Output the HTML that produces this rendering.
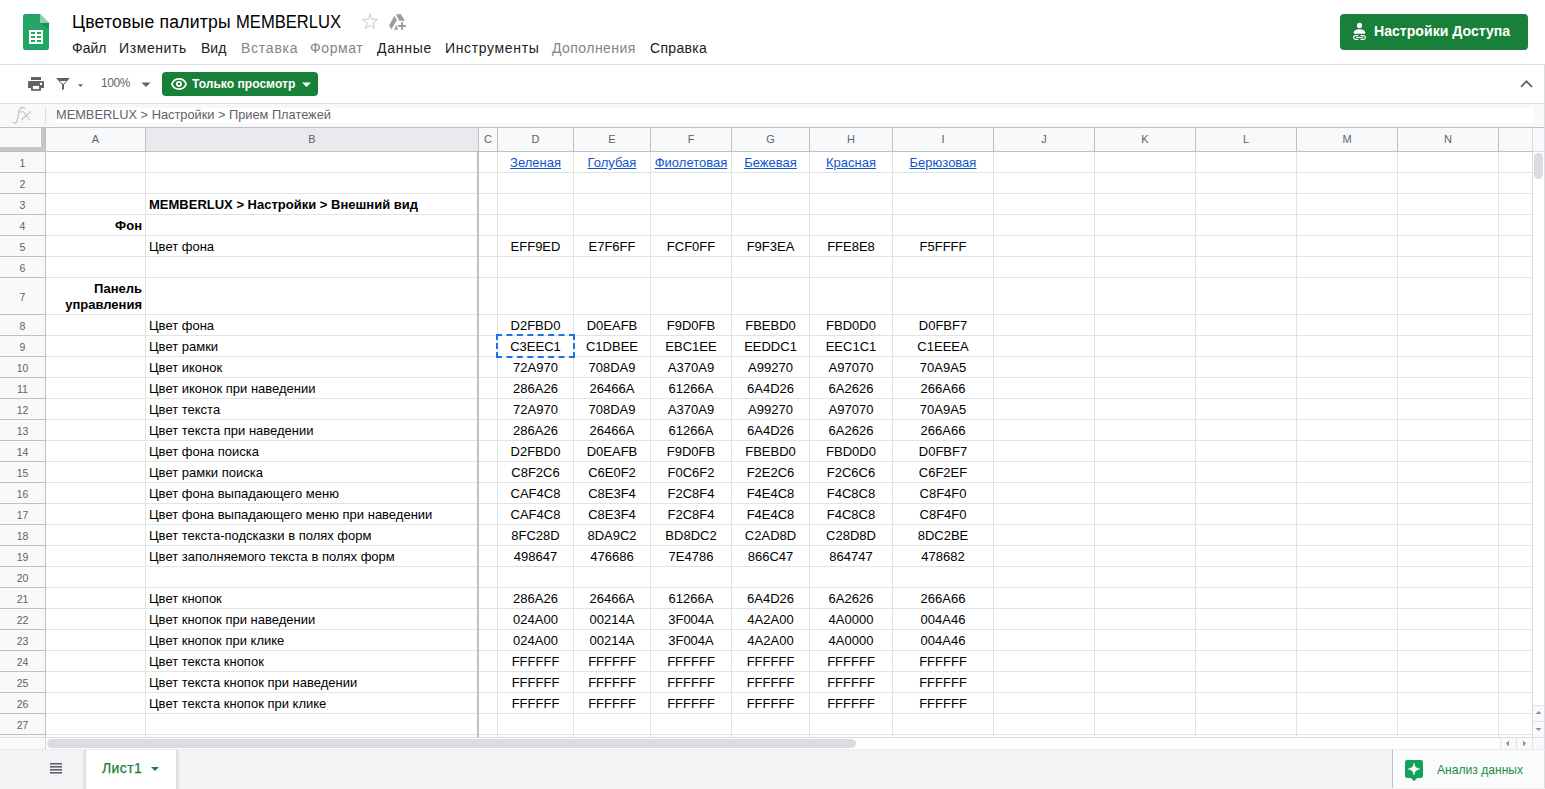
<!DOCTYPE html>
<html><head><meta charset="utf-8"><style>
*{margin:0;padding:0;box-sizing:border-box}
html,body{width:1545px;height:789px;overflow:hidden;background:#fff;font-family:"Liberation Sans",sans-serif;position:relative}
.a{position:absolute}
.hl{position:absolute;height:1px;background:#e2e3e3}
.vl{position:absolute;width:1px;background:#e2e3e3}
.ct{position:absolute;font-size:13px;color:#000;white-space:nowrap;line-height:16px}
.ch{position:absolute;font-size:11px;color:#5f6368;text-align:center;line-height:13px}
.menu{position:absolute;top:39.5px;font-size:14px;color:#202124;white-space:nowrap;line-height:17px}
.dis{color:#80868b}
</style></head><body>

<div class="a" style="left:23px;top:14px;width:26px;height:36px">
<svg width="26" height="36" viewBox="0 0 26 36">
<path d="M2.5 0H17L26 9V33.5A2.5 2.5 0 0 1 23.5 36H2.5A2.5 2.5 0 0 1 0 33.5V2.5A2.5 2.5 0 0 1 2.5 0Z" fill="#23a566"/>
<path d="M17 0V9H26Z" fill="#8ed1b1"/>
<path d="M17 9H26V15Z" fill="#1e8e57"/>
<rect x="6" y="16" width="14" height="14" fill="#fff"/>
<rect x="8" y="18" width="4" height="2" fill="#23a566"/><rect x="14" y="18" width="4" height="2" fill="#23a566"/>
<rect x="8" y="22" width="4" height="2" fill="#23a566"/><rect x="14" y="22" width="4" height="2" fill="#23a566"/>
<rect x="8" y="26" width="4" height="2" fill="#23a566"/><rect x="14" y="26" width="4" height="2" fill="#23a566"/>
</svg></div>
<div class="a" style="left:72px;top:11px;font-size:17.6px;color:#000;white-space:nowrap;line-height:22px;letter-spacing:0.2px">Цветовые палитры <span style="display:inline-block;letter-spacing:0;transform:scaleX(0.943);transform-origin:0 0">MEMBERLUX</span></div>
<svg class="a" style="left:356px;top:10px" width="54" height="24" viewBox="0 0 54 24">
<path d="M14 3.6L15.6 9.3H21.6L16.8 13.1L18.6 18.7L14 15.3L9.4 18.7L11.2 13.1L6.3 9.3H12.4Z" fill="none" stroke="#c6c8ca" stroke-width="0.95" stroke-linejoin="round"/>
<path d="M38.5 5.8L40.9 10L35.3 19.6L33 15.6Z" fill="#9a9ca0"/>
<path d="M39.9 4.2H44.8L49 10.8H43.4Z" fill="#9a9ca0"/>
<path d="M40.6 15L42 19.8H37.9Z" fill="#9a9ca0"/>
<rect x="45.1" y="12.1" width="1.9" height="7.8" fill="#9a9ca0"/>
<rect x="42.1" y="15" width="7.9" height="1.9" fill="#9a9ca0"/>
</svg>
<div class="menu" style="left:72px">Файл</div>
<div class="menu" style="left:119px;letter-spacing:0.6px">Изменить</div>
<div class="menu" style="left:201px">Вид</div>
<div class="menu dis" style="left:241px;letter-spacing:0.75px">Вставка</div>
<div class="menu dis" style="left:310px;letter-spacing:0.6px">Формат</div>
<div class="menu" style="left:377px;letter-spacing:0.75px">Данные</div>
<div class="menu" style="left:445px;letter-spacing:0.65px">Инструменты</div>
<div class="menu dis" style="left:552px;letter-spacing:0.45px">Дополнения</div>
<div class="menu" style="left:650px;letter-spacing:0.3px">Справка</div>
<div class="a" style="left:1340px;top:14px;width:188px;height:36px;background:#188038;border-radius:4px"></div>
<svg class="a" style="left:1350px;top:20px" width="18" height="22" viewBox="0 0 18 22">
<circle cx="9.5" cy="5.4" r="2.6" fill="#fff"/>
<path d="M3.9 13.8V12.3C3.9 10.3 6.7 9.2 9.5 9.2S15.1 10.3 15.1 12.3V13.8Z" fill="#fff"/>
<path d="M8.4 15.6H5.5A1.9 1.9 0 0 0 5.5 19.4H8.4M10.4 15.6H13.5A1.9 1.9 0 0 1 13.5 19.4H10.4M6.2 17.5H12.8" fill="none" stroke="#fff" stroke-width="1.1"/>
</svg>
<div class="a" style="left:1374px;top:23px;font-size:14.1px;font-weight:bold;color:#fff;white-space:nowrap;line-height:17px">Настройки Доступа</div>

<div class="a" style="left:0;top:64px;width:1545px;height:1px;background:#dadce0"></div>
<div class="a" style="left:1544px;top:64px;width:1px;height:40px;background:#dadce0"></div>
<div class="a" style="left:0;top:103px;width:1545px;height:1px;background:#dadce0"></div>
<svg class="a" style="left:24px;top:72px" width="66" height="24" viewBox="0 0 66 24">
<rect x="7" y="5" width="10" height="3" fill="#5f6368"/>
<path d="M5.2 9H18.8A1.2 1.2 0 0 1 20 10.2V16H4V10.2A1.2 1.2 0 0 1 5.2 9Z" fill="#5f6368"/>
<rect x="7" y="13.7" width="10" height="5.1" fill="#5f6368"/>
<rect x="8.9" y="13.9" width="6.2" height="3.2" fill="#fff"/>
<rect x="15.9" y="10.8" width="2.2" height="2.2" fill="#fff"/>
<path d="M32 6.1H46L40 12.6V17.3L38 18V12.6Z" fill="#5f6368"/>
<path d="M35.8 9H42.3L39.1 12.3Z" fill="#fff"/>
<path d="M54 12.2H59L56.5 15Z" fill="#5f6368"/>
</svg>
<div class="a" style="left:101px;top:76px;font-size:12px;letter-spacing:-0.4px;color:#5f6368;line-height:15px">100%</div>
<svg class="a" style="left:141px;top:82px" width="10" height="6" viewBox="0 0 10 6"><path d="M0.5 0.5H9.5L5 5Z" fill="#5f6368"/></svg>
<div class="a" style="left:162px;top:72px;width:156px;height:24px;background:#188038;border-radius:4px"></div>
<svg class="a" style="left:171px;top:78px" width="16" height="12" viewBox="0 0 16 12">
<path d="M8 0.9C4.6 0.9 2 2.9 0.9 6C2 9.1 4.6 11.1 8 11.1S14 9.1 15.1 6C14 2.9 11.4 0.9 8 0.9Z" fill="none" stroke="#fff" stroke-width="1.8" stroke-linejoin="round"/>
<circle cx="7.95" cy="5.95" r="2.1" fill="none" stroke="#fff" stroke-width="1.9"/>
</svg>
<div class="a" style="left:192px;top:77px;font-size:12.1px;font-weight:bold;color:#fff;white-space:nowrap;line-height:14px">Только просмотр</div>
<svg class="a" style="left:302px;top:82px" width="9" height="6" viewBox="0 0 9 6"><path d="M0 0.5H9L4.5 5Z" fill="#fff"/></svg>
<svg class="a" style="left:1520px;top:79px" width="13" height="9" viewBox="0 0 13 9"><path d="M1 7.8L6.5 2.3L12 7.8" fill="none" stroke="#5f6368" stroke-width="1.8"/></svg>

<div class="a" style="left:0;top:104px;width:1544px;height:23px;background:#f8f8f8"></div>
<div class="a" style="left:56px;top:108px;width:1478px;height:15px;background:#fff"></div>
<svg class="a" style="left:8px;top:104px" width="32" height="23" viewBox="0 0 32 23">
<path d="M5.3 18.4C6.3 19.6 8.3 19.6 9 17.2L11.2 7.2C11.8 4.6 13.2 3.4 14.8 3.5C15.8 3.6 16.4 4.1 16.6 4.5" fill="none" stroke="#c6c6c6" stroke-width="1.3" stroke-linecap="round"/>
<path d="M9.3 7.8H15.6" fill="none" stroke="#c6c6c6" stroke-width="1"/>
<path d="M15.3 7.6L21.6 16M22.8 7.4L13.4 16" fill="none" stroke="#c6c6c6" stroke-width="1.2"/>
</svg>
<div class="a" style="left:45px;top:107px;width:1px;height:17px;background:#dadce0"></div>
<div class="a" style="left:56px;top:107px;font-size:12.8px;color:#5f6368;white-space:nowrap;line-height:15px">MEMBERLUX &gt; Настройки &gt; Прием Платежей</div>

<div class="a" style="left:0;top:127px;width:1544px;height:1px;background:#c0c0c0"></div>
<div class="a" style="left:0;top:128px;width:1544px;height:23px;background:#f8f9fa"></div>
<div class="a" style="left:0;top:147px;width:45px;height:4px;background:#c6c6c6"></div>
<div class="a" style="left:41px;top:128px;width:4px;height:23px;background:#c6c6c6"></div>
<div class="a" style="left:146px;top:128px;width:332px;height:23px;background:#e8eaed"></div>
<div class="ch" style="left:46px;top:133px;width:99px">A</div>
<div class="a" style="left:145px;top:128px;width:1px;height:23px;background:#c0c0c0"></div>
<div class="ch" style="left:146px;top:133px;width:332px">B</div>
<div class="a" style="left:478px;top:128px;width:1px;height:23px;background:#c0c0c0"></div>
<div class="ch" style="left:479px;top:133px;width:18px">C</div>
<div class="a" style="left:497px;top:128px;width:1px;height:23px;background:#c0c0c0"></div>
<div class="ch" style="left:498px;top:133px;width:75px">D</div>
<div class="a" style="left:573px;top:128px;width:1px;height:23px;background:#c0c0c0"></div>
<div class="ch" style="left:574px;top:133px;width:76px">E</div>
<div class="a" style="left:650px;top:128px;width:1px;height:23px;background:#c0c0c0"></div>
<div class="ch" style="left:651px;top:133px;width:80px">F</div>
<div class="a" style="left:731px;top:128px;width:1px;height:23px;background:#c0c0c0"></div>
<div class="ch" style="left:732px;top:133px;width:77px">G</div>
<div class="a" style="left:809px;top:128px;width:1px;height:23px;background:#c0c0c0"></div>
<div class="ch" style="left:810px;top:133px;width:82px">H</div>
<div class="a" style="left:892px;top:128px;width:1px;height:23px;background:#c0c0c0"></div>
<div class="ch" style="left:893px;top:133px;width:100px">I</div>
<div class="a" style="left:993px;top:128px;width:1px;height:23px;background:#c0c0c0"></div>
<div class="ch" style="left:994px;top:133px;width:100px">J</div>
<div class="a" style="left:1094px;top:128px;width:1px;height:23px;background:#c0c0c0"></div>
<div class="ch" style="left:1095px;top:133px;width:100px">K</div>
<div class="a" style="left:1195px;top:128px;width:1px;height:23px;background:#c0c0c0"></div>
<div class="ch" style="left:1196px;top:133px;width:100px">L</div>
<div class="a" style="left:1296px;top:128px;width:1px;height:23px;background:#c0c0c0"></div>
<div class="ch" style="left:1297px;top:133px;width:100px">M</div>
<div class="a" style="left:1397px;top:128px;width:1px;height:23px;background:#c0c0c0"></div>
<div class="ch" style="left:1398px;top:133px;width:100px">N</div>
<div class="a" style="left:1498px;top:128px;width:1px;height:23px;background:#c0c0c0"></div>
<div class="a" style="left:45px;top:128px;width:1px;height:23px;background:#c0c0c0"></div>
<div class="a" style="left:1532px;top:128px;width:1px;height:23px;background:#c0c0c0"></div>
<div class="a" style="left:0;top:151px;width:1532px;height:1px;background:#c0c0c0"></div>
<div class="a" style="left:1533px;top:151px;width:11px;height:1px;background:#dadce0"></div>
<div class="a" style="left:0;top:152px;width:45px;height:597px;background:#f8f9fa"></div>
<div class="a" style="left:45px;top:152px;width:1px;height:586px;background:#c0c0c0"></div>
<div class="a" style="left:45px;top:738px;width:1px;height:11px;background:#d4d4d4"></div>
<div class="ch" style="left:0;top:156.5px;width:45px;font-size:10.5px">1</div>
<div class="a" style="left:0;top:172px;width:45px;height:1px;background:#c0c0c0"></div>
<div class="ch" style="left:0;top:177.5px;width:45px;font-size:10.5px">2</div>
<div class="a" style="left:0;top:193px;width:45px;height:1px;background:#c0c0c0"></div>
<div class="ch" style="left:0;top:198.5px;width:45px;font-size:10.5px">3</div>
<div class="a" style="left:0;top:214px;width:45px;height:1px;background:#c0c0c0"></div>
<div class="ch" style="left:0;top:219.5px;width:45px;font-size:10.5px">4</div>
<div class="a" style="left:0;top:235px;width:45px;height:1px;background:#c0c0c0"></div>
<div class="ch" style="left:0;top:240.5px;width:45px;font-size:10.5px">5</div>
<div class="a" style="left:0;top:256px;width:45px;height:1px;background:#c0c0c0"></div>
<div class="ch" style="left:0;top:261.5px;width:45px;font-size:10.5px">6</div>
<div class="a" style="left:0;top:277px;width:45px;height:1px;background:#c0c0c0"></div>
<div class="ch" style="left:0;top:290.5px;width:45px;font-size:10.5px">7</div>
<div class="a" style="left:0;top:314px;width:45px;height:1px;background:#c0c0c0"></div>
<div class="ch" style="left:0;top:319.5px;width:45px;font-size:10.5px">8</div>
<div class="a" style="left:0;top:335px;width:45px;height:1px;background:#c0c0c0"></div>
<div class="ch" style="left:0;top:340.5px;width:45px;font-size:10.5px">9</div>
<div class="a" style="left:0;top:356px;width:45px;height:1px;background:#c0c0c0"></div>
<div class="ch" style="left:0;top:361.5px;width:45px;font-size:10.5px">10</div>
<div class="a" style="left:0;top:377px;width:45px;height:1px;background:#c0c0c0"></div>
<div class="ch" style="left:0;top:382.5px;width:45px;font-size:10.5px">11</div>
<div class="a" style="left:0;top:398px;width:45px;height:1px;background:#c0c0c0"></div>
<div class="ch" style="left:0;top:403.5px;width:45px;font-size:10.5px">12</div>
<div class="a" style="left:0;top:419px;width:45px;height:1px;background:#c0c0c0"></div>
<div class="ch" style="left:0;top:424.5px;width:45px;font-size:10.5px">13</div>
<div class="a" style="left:0;top:440px;width:45px;height:1px;background:#c0c0c0"></div>
<div class="ch" style="left:0;top:445.5px;width:45px;font-size:10.5px">14</div>
<div class="a" style="left:0;top:461px;width:45px;height:1px;background:#c0c0c0"></div>
<div class="ch" style="left:0;top:466.5px;width:45px;font-size:10.5px">15</div>
<div class="a" style="left:0;top:482px;width:45px;height:1px;background:#c0c0c0"></div>
<div class="ch" style="left:0;top:487.5px;width:45px;font-size:10.5px">16</div>
<div class="a" style="left:0;top:503px;width:45px;height:1px;background:#c0c0c0"></div>
<div class="ch" style="left:0;top:508.5px;width:45px;font-size:10.5px">17</div>
<div class="a" style="left:0;top:524px;width:45px;height:1px;background:#c0c0c0"></div>
<div class="ch" style="left:0;top:529.5px;width:45px;font-size:10.5px">18</div>
<div class="a" style="left:0;top:545px;width:45px;height:1px;background:#c0c0c0"></div>
<div class="ch" style="left:0;top:550.5px;width:45px;font-size:10.5px">19</div>
<div class="a" style="left:0;top:566px;width:45px;height:1px;background:#c0c0c0"></div>
<div class="ch" style="left:0;top:571.5px;width:45px;font-size:10.5px">20</div>
<div class="a" style="left:0;top:587px;width:45px;height:1px;background:#c0c0c0"></div>
<div class="ch" style="left:0;top:592.5px;width:45px;font-size:10.5px">21</div>
<div class="a" style="left:0;top:608px;width:45px;height:1px;background:#c0c0c0"></div>
<div class="ch" style="left:0;top:613.5px;width:45px;font-size:10.5px">22</div>
<div class="a" style="left:0;top:629px;width:45px;height:1px;background:#c0c0c0"></div>
<div class="ch" style="left:0;top:634.5px;width:45px;font-size:10.5px">23</div>
<div class="a" style="left:0;top:650px;width:45px;height:1px;background:#c0c0c0"></div>
<div class="ch" style="left:0;top:655.5px;width:45px;font-size:10.5px">24</div>
<div class="a" style="left:0;top:671px;width:45px;height:1px;background:#c0c0c0"></div>
<div class="ch" style="left:0;top:676.5px;width:45px;font-size:10.5px">25</div>
<div class="a" style="left:0;top:692px;width:45px;height:1px;background:#c0c0c0"></div>
<div class="ch" style="left:0;top:697.5px;width:45px;font-size:10.5px">26</div>
<div class="a" style="left:0;top:713px;width:45px;height:1px;background:#c0c0c0"></div>
<div class="ch" style="left:0;top:718.5px;width:45px;font-size:10.5px">27</div>
<div class="a" style="left:0;top:734px;width:45px;height:1px;background:#c0c0c0"></div>
<div class="hl" style="left:46px;top:172px;width:1486px"></div>
<div class="hl" style="left:46px;top:193px;width:1486px"></div>
<div class="hl" style="left:46px;top:214px;width:1486px"></div>
<div class="hl" style="left:46px;top:235px;width:1486px"></div>
<div class="hl" style="left:46px;top:256px;width:1486px"></div>
<div class="hl" style="left:46px;top:277px;width:1486px"></div>
<div class="hl" style="left:46px;top:314px;width:1486px"></div>
<div class="hl" style="left:46px;top:335px;width:1486px"></div>
<div class="hl" style="left:46px;top:356px;width:1486px"></div>
<div class="hl" style="left:46px;top:377px;width:1486px"></div>
<div class="hl" style="left:46px;top:398px;width:1486px"></div>
<div class="hl" style="left:46px;top:419px;width:1486px"></div>
<div class="hl" style="left:46px;top:440px;width:1486px"></div>
<div class="hl" style="left:46px;top:461px;width:1486px"></div>
<div class="hl" style="left:46px;top:482px;width:1486px"></div>
<div class="hl" style="left:46px;top:503px;width:1486px"></div>
<div class="hl" style="left:46px;top:524px;width:1486px"></div>
<div class="hl" style="left:46px;top:545px;width:1486px"></div>
<div class="hl" style="left:46px;top:566px;width:1486px"></div>
<div class="hl" style="left:46px;top:587px;width:1486px"></div>
<div class="hl" style="left:46px;top:608px;width:1486px"></div>
<div class="hl" style="left:46px;top:629px;width:1486px"></div>
<div class="hl" style="left:46px;top:650px;width:1486px"></div>
<div class="hl" style="left:46px;top:671px;width:1486px"></div>
<div class="hl" style="left:46px;top:692px;width:1486px"></div>
<div class="hl" style="left:46px;top:713px;width:1486px"></div>
<div class="hl" style="left:46px;top:734px;width:1486px"></div>
<div class="vl" style="left:145px;top:152px;height:585px"></div>
<div class="vl" style="left:497px;top:152px;height:585px"></div>
<div class="vl" style="left:573px;top:152px;height:585px"></div>
<div class="vl" style="left:650px;top:152px;height:585px"></div>
<div class="vl" style="left:731px;top:152px;height:585px"></div>
<div class="vl" style="left:809px;top:152px;height:585px"></div>
<div class="vl" style="left:892px;top:152px;height:585px"></div>
<div class="vl" style="left:993px;top:152px;height:585px"></div>
<div class="vl" style="left:1094px;top:152px;height:585px"></div>
<div class="vl" style="left:1195px;top:152px;height:585px"></div>
<div class="vl" style="left:1296px;top:152px;height:585px"></div>
<div class="vl" style="left:1397px;top:152px;height:585px"></div>
<div class="vl" style="left:1498px;top:152px;height:585px"></div>
<div class="a" style="left:477px;top:152px;width:2px;height:585px;background:#bdc1c6"></div>
<div class="a" style="left:1532px;top:128px;width:1px;height:609px;background:#dadce0"></div>
<div class="a" style="left:1544px;top:104px;width:1px;height:645px;background:#dadce0"></div>
<div class="ct" style="left:498px;width:75px;top:155px;text-align:center;padding:0 3px;color:#1155cc;text-decoration:underline;">Зеленая</div>
<div class="ct" style="left:574px;width:76px;top:155px;text-align:center;padding:0 3px;color:#1155cc;text-decoration:underline;">Голубая</div>
<div class="ct" style="left:651px;width:80px;top:155px;text-align:center;padding:0 3px;color:#1155cc;text-decoration:underline;">Фиолетовая</div>
<div class="ct" style="left:732px;width:77px;top:155px;text-align:center;padding:0 3px;color:#1155cc;text-decoration:underline;">Бежевая</div>
<div class="ct" style="left:810px;width:82px;top:155px;text-align:center;padding:0 3px;color:#1155cc;text-decoration:underline;">Красная</div>
<div class="ct" style="left:893px;width:100px;top:155px;text-align:center;padding:0 3px;color:#1155cc;text-decoration:underline;">Берюзовая</div>
<div class="ct" style="left:146px;width:332px;top:197px;text-align:left;padding:0 3px;font-weight:bold;">MEMBERLUX &gt; Настройки &gt; Внешний вид</div>
<div class="ct" style="left:46px;width:99px;top:218px;text-align:right;padding:0 3px;font-weight:bold;">Фон</div>
<div class="ct" style="left:46px;width:99px;top:281px;text-align:right;padding:0 3px;font-weight:bold;line-height:16px">Панель<br>управления</div>
<div class="ct" style="left:146px;width:332px;top:239px;text-align:left;padding:0 3px;">Цвет фона</div>
<div class="ct" style="left:498px;width:75px;top:239px;text-align:center;padding:0 3px;">EFF9ED</div>
<div class="ct" style="left:574px;width:76px;top:239px;text-align:center;padding:0 3px;">E7F6FF</div>
<div class="ct" style="left:651px;width:80px;top:239px;text-align:center;padding:0 3px;">FCF0FF</div>
<div class="ct" style="left:732px;width:77px;top:239px;text-align:center;padding:0 3px;">F9F3EA</div>
<div class="ct" style="left:810px;width:82px;top:239px;text-align:center;padding:0 3px;">FFE8E8</div>
<div class="ct" style="left:893px;width:100px;top:239px;text-align:center;padding:0 3px;">F5FFFF</div>
<div class="ct" style="left:146px;width:332px;top:318px;text-align:left;padding:0 3px;">Цвет фона</div>
<div class="ct" style="left:498px;width:75px;top:318px;text-align:center;padding:0 3px;">D2FBD0</div>
<div class="ct" style="left:574px;width:76px;top:318px;text-align:center;padding:0 3px;">D0EAFB</div>
<div class="ct" style="left:651px;width:80px;top:318px;text-align:center;padding:0 3px;">F9D0FB</div>
<div class="ct" style="left:732px;width:77px;top:318px;text-align:center;padding:0 3px;">FBEBD0</div>
<div class="ct" style="left:810px;width:82px;top:318px;text-align:center;padding:0 3px;">FBD0D0</div>
<div class="ct" style="left:893px;width:100px;top:318px;text-align:center;padding:0 3px;">D0FBF7</div>
<div class="ct" style="left:146px;width:332px;top:339px;text-align:left;padding:0 3px;">Цвет рамки</div>
<div class="ct" style="left:498px;width:75px;top:339px;text-align:center;padding:0 3px;">C3EEC1</div>
<div class="ct" style="left:574px;width:76px;top:339px;text-align:center;padding:0 3px;">C1DBEE</div>
<div class="ct" style="left:651px;width:80px;top:339px;text-align:center;padding:0 3px;">EBC1EE</div>
<div class="ct" style="left:732px;width:77px;top:339px;text-align:center;padding:0 3px;">EEDDC1</div>
<div class="ct" style="left:810px;width:82px;top:339px;text-align:center;padding:0 3px;">EEC1C1</div>
<div class="ct" style="left:893px;width:100px;top:339px;text-align:center;padding:0 3px;">C1EEEA</div>
<div class="ct" style="left:146px;width:332px;top:360px;text-align:left;padding:0 3px;">Цвет иконок</div>
<div class="ct" style="left:498px;width:75px;top:360px;text-align:center;padding:0 3px;">72A970</div>
<div class="ct" style="left:574px;width:76px;top:360px;text-align:center;padding:0 3px;">708DA9</div>
<div class="ct" style="left:651px;width:80px;top:360px;text-align:center;padding:0 3px;">A370A9</div>
<div class="ct" style="left:732px;width:77px;top:360px;text-align:center;padding:0 3px;">A99270</div>
<div class="ct" style="left:810px;width:82px;top:360px;text-align:center;padding:0 3px;">A97070</div>
<div class="ct" style="left:893px;width:100px;top:360px;text-align:center;padding:0 3px;">70A9A5</div>
<div class="ct" style="left:146px;width:332px;top:381px;text-align:left;padding:0 3px;">Цвет иконок при наведении</div>
<div class="ct" style="left:498px;width:75px;top:381px;text-align:center;padding:0 3px;">286A26</div>
<div class="ct" style="left:574px;width:76px;top:381px;text-align:center;padding:0 3px;">26466A</div>
<div class="ct" style="left:651px;width:80px;top:381px;text-align:center;padding:0 3px;">61266A</div>
<div class="ct" style="left:732px;width:77px;top:381px;text-align:center;padding:0 3px;">6A4D26</div>
<div class="ct" style="left:810px;width:82px;top:381px;text-align:center;padding:0 3px;">6A2626</div>
<div class="ct" style="left:893px;width:100px;top:381px;text-align:center;padding:0 3px;">266A66</div>
<div class="ct" style="left:146px;width:332px;top:402px;text-align:left;padding:0 3px;">Цвет текста</div>
<div class="ct" style="left:498px;width:75px;top:402px;text-align:center;padding:0 3px;">72A970</div>
<div class="ct" style="left:574px;width:76px;top:402px;text-align:center;padding:0 3px;">708DA9</div>
<div class="ct" style="left:651px;width:80px;top:402px;text-align:center;padding:0 3px;">A370A9</div>
<div class="ct" style="left:732px;width:77px;top:402px;text-align:center;padding:0 3px;">A99270</div>
<div class="ct" style="left:810px;width:82px;top:402px;text-align:center;padding:0 3px;">A97070</div>
<div class="ct" style="left:893px;width:100px;top:402px;text-align:center;padding:0 3px;">70A9A5</div>
<div class="ct" style="left:146px;width:332px;top:423px;text-align:left;padding:0 3px;">Цвет текста при наведении</div>
<div class="ct" style="left:498px;width:75px;top:423px;text-align:center;padding:0 3px;">286A26</div>
<div class="ct" style="left:574px;width:76px;top:423px;text-align:center;padding:0 3px;">26466A</div>
<div class="ct" style="left:651px;width:80px;top:423px;text-align:center;padding:0 3px;">61266A</div>
<div class="ct" style="left:732px;width:77px;top:423px;text-align:center;padding:0 3px;">6A4D26</div>
<div class="ct" style="left:810px;width:82px;top:423px;text-align:center;padding:0 3px;">6A2626</div>
<div class="ct" style="left:893px;width:100px;top:423px;text-align:center;padding:0 3px;">266A66</div>
<div class="ct" style="left:146px;width:332px;top:444px;text-align:left;padding:0 3px;">Цвет фона поиска</div>
<div class="ct" style="left:498px;width:75px;top:444px;text-align:center;padding:0 3px;">D2FBD0</div>
<div class="ct" style="left:574px;width:76px;top:444px;text-align:center;padding:0 3px;">D0EAFB</div>
<div class="ct" style="left:651px;width:80px;top:444px;text-align:center;padding:0 3px;">F9D0FB</div>
<div class="ct" style="left:732px;width:77px;top:444px;text-align:center;padding:0 3px;">FBEBD0</div>
<div class="ct" style="left:810px;width:82px;top:444px;text-align:center;padding:0 3px;">FBD0D0</div>
<div class="ct" style="left:893px;width:100px;top:444px;text-align:center;padding:0 3px;">D0FBF7</div>
<div class="ct" style="left:146px;width:332px;top:465px;text-align:left;padding:0 3px;">Цвет рамки поиска</div>
<div class="ct" style="left:498px;width:75px;top:465px;text-align:center;padding:0 3px;">C8F2C6</div>
<div class="ct" style="left:574px;width:76px;top:465px;text-align:center;padding:0 3px;">C6E0F2</div>
<div class="ct" style="left:651px;width:80px;top:465px;text-align:center;padding:0 3px;">F0C6F2</div>
<div class="ct" style="left:732px;width:77px;top:465px;text-align:center;padding:0 3px;">F2E2C6</div>
<div class="ct" style="left:810px;width:82px;top:465px;text-align:center;padding:0 3px;">F2C6C6</div>
<div class="ct" style="left:893px;width:100px;top:465px;text-align:center;padding:0 3px;">C6F2EF</div>
<div class="ct" style="left:146px;width:332px;top:486px;text-align:left;padding:0 3px;">Цвет фона выпадающего меню</div>
<div class="ct" style="left:498px;width:75px;top:486px;text-align:center;padding:0 3px;">CAF4C8</div>
<div class="ct" style="left:574px;width:76px;top:486px;text-align:center;padding:0 3px;">C8E3F4</div>
<div class="ct" style="left:651px;width:80px;top:486px;text-align:center;padding:0 3px;">F2C8F4</div>
<div class="ct" style="left:732px;width:77px;top:486px;text-align:center;padding:0 3px;">F4E4C8</div>
<div class="ct" style="left:810px;width:82px;top:486px;text-align:center;padding:0 3px;">F4C8C8</div>
<div class="ct" style="left:893px;width:100px;top:486px;text-align:center;padding:0 3px;">C8F4F0</div>
<div class="ct" style="left:146px;width:332px;top:507px;text-align:left;padding:0 3px;">Цвет фона выпадающего меню при наведении</div>
<div class="ct" style="left:498px;width:75px;top:507px;text-align:center;padding:0 3px;">CAF4C8</div>
<div class="ct" style="left:574px;width:76px;top:507px;text-align:center;padding:0 3px;">C8E3F4</div>
<div class="ct" style="left:651px;width:80px;top:507px;text-align:center;padding:0 3px;">F2C8F4</div>
<div class="ct" style="left:732px;width:77px;top:507px;text-align:center;padding:0 3px;">F4E4C8</div>
<div class="ct" style="left:810px;width:82px;top:507px;text-align:center;padding:0 3px;">F4C8C8</div>
<div class="ct" style="left:893px;width:100px;top:507px;text-align:center;padding:0 3px;">C8F4F0</div>
<div class="ct" style="left:146px;width:332px;top:528px;text-align:left;padding:0 3px;">Цвет текста-подсказки в полях форм</div>
<div class="ct" style="left:498px;width:75px;top:528px;text-align:center;padding:0 3px;">8FC28D</div>
<div class="ct" style="left:574px;width:76px;top:528px;text-align:center;padding:0 3px;">8DA9C2</div>
<div class="ct" style="left:651px;width:80px;top:528px;text-align:center;padding:0 3px;">BD8DC2</div>
<div class="ct" style="left:732px;width:77px;top:528px;text-align:center;padding:0 3px;">C2AD8D</div>
<div class="ct" style="left:810px;width:82px;top:528px;text-align:center;padding:0 3px;">C28D8D</div>
<div class="ct" style="left:893px;width:100px;top:528px;text-align:center;padding:0 3px;">8DC2BE</div>
<div class="ct" style="left:146px;width:332px;top:549px;text-align:left;padding:0 3px;">Цвет заполняемого текста в полях форм</div>
<div class="ct" style="left:498px;width:75px;top:549px;text-align:center;padding:0 3px;">498647</div>
<div class="ct" style="left:574px;width:76px;top:549px;text-align:center;padding:0 3px;">476686</div>
<div class="ct" style="left:651px;width:80px;top:549px;text-align:center;padding:0 3px;">7E4786</div>
<div class="ct" style="left:732px;width:77px;top:549px;text-align:center;padding:0 3px;">866C47</div>
<div class="ct" style="left:810px;width:82px;top:549px;text-align:center;padding:0 3px;">864747</div>
<div class="ct" style="left:893px;width:100px;top:549px;text-align:center;padding:0 3px;">478682</div>
<div class="ct" style="left:146px;width:332px;top:591px;text-align:left;padding:0 3px;">Цвет кнопок</div>
<div class="ct" style="left:498px;width:75px;top:591px;text-align:center;padding:0 3px;">286A26</div>
<div class="ct" style="left:574px;width:76px;top:591px;text-align:center;padding:0 3px;">26466A</div>
<div class="ct" style="left:651px;width:80px;top:591px;text-align:center;padding:0 3px;">61266A</div>
<div class="ct" style="left:732px;width:77px;top:591px;text-align:center;padding:0 3px;">6A4D26</div>
<div class="ct" style="left:810px;width:82px;top:591px;text-align:center;padding:0 3px;">6A2626</div>
<div class="ct" style="left:893px;width:100px;top:591px;text-align:center;padding:0 3px;">266A66</div>
<div class="ct" style="left:146px;width:332px;top:612px;text-align:left;padding:0 3px;">Цвет кнопок при наведении</div>
<div class="ct" style="left:498px;width:75px;top:612px;text-align:center;padding:0 3px;">024A00</div>
<div class="ct" style="left:574px;width:76px;top:612px;text-align:center;padding:0 3px;">00214A</div>
<div class="ct" style="left:651px;width:80px;top:612px;text-align:center;padding:0 3px;">3F004A</div>
<div class="ct" style="left:732px;width:77px;top:612px;text-align:center;padding:0 3px;">4A2A00</div>
<div class="ct" style="left:810px;width:82px;top:612px;text-align:center;padding:0 3px;">4A0000</div>
<div class="ct" style="left:893px;width:100px;top:612px;text-align:center;padding:0 3px;">004A46</div>
<div class="ct" style="left:146px;width:332px;top:633px;text-align:left;padding:0 3px;">Цвет кнопок при клике</div>
<div class="ct" style="left:498px;width:75px;top:633px;text-align:center;padding:0 3px;">024A00</div>
<div class="ct" style="left:574px;width:76px;top:633px;text-align:center;padding:0 3px;">00214A</div>
<div class="ct" style="left:651px;width:80px;top:633px;text-align:center;padding:0 3px;">3F004A</div>
<div class="ct" style="left:732px;width:77px;top:633px;text-align:center;padding:0 3px;">4A2A00</div>
<div class="ct" style="left:810px;width:82px;top:633px;text-align:center;padding:0 3px;">4A0000</div>
<div class="ct" style="left:893px;width:100px;top:633px;text-align:center;padding:0 3px;">004A46</div>
<div class="ct" style="left:146px;width:332px;top:654px;text-align:left;padding:0 3px;">Цвет текста кнопок</div>
<div class="ct" style="left:498px;width:75px;top:654px;text-align:center;padding:0 3px;">FFFFFF</div>
<div class="ct" style="left:574px;width:76px;top:654px;text-align:center;padding:0 3px;">FFFFFF</div>
<div class="ct" style="left:651px;width:80px;top:654px;text-align:center;padding:0 3px;">FFFFFF</div>
<div class="ct" style="left:732px;width:77px;top:654px;text-align:center;padding:0 3px;">FFFFFF</div>
<div class="ct" style="left:810px;width:82px;top:654px;text-align:center;padding:0 3px;">FFFFFF</div>
<div class="ct" style="left:893px;width:100px;top:654px;text-align:center;padding:0 3px;">FFFFFF</div>
<div class="ct" style="left:146px;width:332px;top:675px;text-align:left;padding:0 3px;">Цвет текста кнопок при наведении</div>
<div class="ct" style="left:498px;width:75px;top:675px;text-align:center;padding:0 3px;">FFFFFF</div>
<div class="ct" style="left:574px;width:76px;top:675px;text-align:center;padding:0 3px;">FFFFFF</div>
<div class="ct" style="left:651px;width:80px;top:675px;text-align:center;padding:0 3px;">FFFFFF</div>
<div class="ct" style="left:732px;width:77px;top:675px;text-align:center;padding:0 3px;">FFFFFF</div>
<div class="ct" style="left:810px;width:82px;top:675px;text-align:center;padding:0 3px;">FFFFFF</div>
<div class="ct" style="left:893px;width:100px;top:675px;text-align:center;padding:0 3px;">FFFFFF</div>
<div class="ct" style="left:146px;width:332px;top:696px;text-align:left;padding:0 3px;">Цвет текста кнопок при клике</div>
<div class="ct" style="left:498px;width:75px;top:696px;text-align:center;padding:0 3px;">FFFFFF</div>
<div class="ct" style="left:574px;width:76px;top:696px;text-align:center;padding:0 3px;">FFFFFF</div>
<div class="ct" style="left:651px;width:80px;top:696px;text-align:center;padding:0 3px;">FFFFFF</div>
<div class="ct" style="left:732px;width:77px;top:696px;text-align:center;padding:0 3px;">FFFFFF</div>
<div class="ct" style="left:810px;width:82px;top:696px;text-align:center;padding:0 3px;">FFFFFF</div>
<div class="ct" style="left:893px;width:100px;top:696px;text-align:center;padding:0 3px;">FFFFFF</div>
<div class="a" style="left:496px;top:334px;width:79px;height:24px;border:2px dashed #1a73e8"></div>
<div class="a" style="left:1534px;top:153px;width:9px;height:26px;border-radius:5px;background:#dadce0"></div>
<div class="a" style="left:1533px;top:705px;width:11px;height:32px;background:#f8f9fa"></div>
<div class="a" style="left:1533px;top:705px;width:11px;height:1px;background:#e2e3e3"></div>
<div class="a" style="left:1533px;top:721px;width:11px;height:1px;background:#e2e3e3"></div>
<svg class="a" style="left:1535px;top:710px" width="7" height="5" viewBox="0 0 7 5"><path d="M0.6 4H6.4L3.5 1Z" fill="#909090"/></svg>
<svg class="a" style="left:1535px;top:727px" width="7" height="5" viewBox="0 0 7 5"><path d="M0.6 1H6.4L3.5 4Z" fill="#909090"/></svg>
<div class="a" style="left:0;top:737px;width:1545px;height:1px;background:#dadce0"></div>
<div class="a" style="left:47px;top:739px;width:809px;height:9px;border-radius:5px;background:#dadce0"></div>
<div class="a" style="left:1501px;top:738px;width:43px;height:11px;background:#f8f9fa"></div>
<div class="a" style="left:1500px;top:738px;width:1px;height:11px;background:#e2e3e3"></div>
<div class="a" style="left:1516px;top:738px;width:1px;height:11px;background:#e2e3e3"></div>
<div class="a" style="left:1532px;top:738px;width:1px;height:11px;background:#e2e3e3"></div>
<svg class="a" style="left:1505px;top:740px" width="5" height="7" viewBox="0 0 5 7"><path d="M4 0.6V6.4L1 3.5Z" fill="#909090"/></svg>
<svg class="a" style="left:1522px;top:740px" width="5" height="7" viewBox="0 0 5 7"><path d="M1 0.6V6.4L4 3.5Z" fill="#909090"/></svg>
<div class="a" style="left:0;top:749px;width:1545px;height:1px;background:#e8eaed"></div>
<div class="a" style="left:0;top:750px;width:1545px;height:39px;background:#f1f3f4"></div>
<svg class="a" style="left:50px;top:763px" width="12" height="11" viewBox="0 0 12 11"><rect y="0" width="12" height="1.6" fill="#5f6368"/><rect y="3" width="12" height="1.6" fill="#5f6368"/><rect y="6" width="12" height="1.6" fill="#5f6368"/><rect y="9" width="12" height="1.6" fill="#5f6368"/></svg>
<div class="a" style="left:82px;top:750px;width:4px;height:39px;background:linear-gradient(to right,rgba(218,220,224,0),#d7d9dc)"></div>
<div class="a" style="left:176px;top:750px;width:4px;height:39px;background:linear-gradient(to left,rgba(218,220,224,0),#d7d9dc)"></div>
<div class="a" style="left:86px;top:750px;width:90px;height:39px;background:#fff"></div>
<div class="a" style="left:102px;top:760px;font-size:14px;letter-spacing:0.4px;color:#188038;line-height:17px;-webkit-text-stroke:0.25px #188038">Лист1</div>
<svg class="a" style="left:151px;top:767px" width="8" height="4" viewBox="0 0 8 4"><path d="M0 0H8L4 4Z" fill="#188038"/></svg>
<div class="a" style="left:1392px;top:750px;width:153px;height:38px;background:#fafbfb;border-left:1px solid #bdc1c6;border-right:1px solid #dadce0"></div>
<svg class="a" style="left:1405px;top:760px" width="18" height="22" viewBox="0 0 18 22"><path d="M2.2 0H15.8A2.2 2.2 0 0 1 18 2.2V15.8A2.2 2.2 0 0 1 15.8 18H12.2L9 21.2L5.8 18H2.2A2.2 2.2 0 0 1 0 15.8V2.2A2.2 2.2 0 0 1 2.2 0Z" fill="#16a05a"/><path d="M9 3.4C9.5 6.6 10.6 8.2 14.6 9C10.6 9.8 9.5 11.4 9 14.6C8.5 11.4 7.4 9.8 3.4 9C7.4 8.2 8.5 6.6 9 3.4Z" fill="#fff" stroke="#fff" stroke-width="0.8" stroke-linejoin="round"/></svg>
<div class="a" style="left:1437px;top:763px;font-size:12.1px;color:#1e8e3e;white-space:nowrap;line-height:14px">Анализ данных</div>
</body></html>
